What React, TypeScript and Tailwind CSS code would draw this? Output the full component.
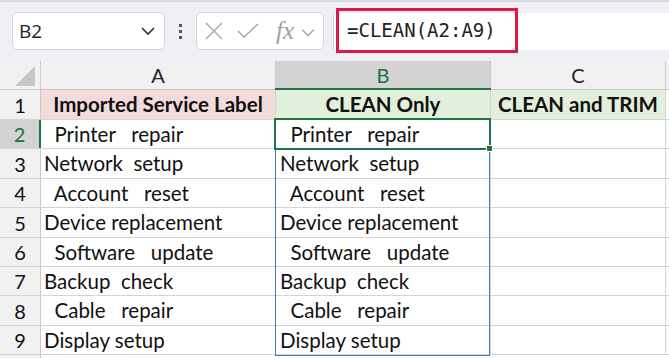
import React from "react";

const rows: { n: number; a: string; b: string; h: number }[] = [
  { n: 2, a: "  Printer   repair", b: "  Printer   repair", h: 29 },
  { n: 3, a: "Network  setup", b: "Network  setup", h: 30 },
  { n: 4, a: "  Account   reset", b: "  Account   reset", h: 29 },
  { n: 5, a: "Device replacement", b: "Device replacement", h: 30 },
  { n: 6, a: "  Software   update", b: "  Software   update", h: 29 },
  { n: 7, a: "Backup  check", b: "Backup  check", h: 29 },
  { n: 8, a: "  Cable   repair", b: "  Cable   repair", h: 30 },
  { n: 9, a: "Display setup", b: "Display setup", h: 29 },
];

const cellFont = { fontFamily: "Lato, 'Noto Sans', sans-serif" };

export default function App() {
  return (
    <div
      className="w-[669px] h-[358px] overflow-hidden bg-[#eef0f3] relative"
      style={cellFont}
    >
      {/* toolbar */}
      <div className="h-[61px] border-t-2 border-[#d6d8dc] flex items-start pt-[10px]">
        <div className="ml-[12px] w-[153px] h-[38px] rounded-[6px] border border-[#d4d6da] bg-white flex items-center justify-between pl-[6px] pr-[8px]">
          <span className="text-[19px] text-[#222]" style={{ fontFamily: "'Open Sans', 'Noto Sans', sans-serif" }}>
            B2
          </span>
          <svg width="16" height="10" viewBox="0 0 16 10">
            <path d="M2 2 L8 8 L14 2" fill="none" stroke="#333" strokeWidth="1.6" />
          </svg>
        </div>
        <div className="w-[31px] h-[38px] flex flex-col items-center justify-center gap-[3px]">
          <div className="w-[3px] h-[3px] bg-[#555]" />
          <div className="w-[3px] h-[3px] bg-[#555]" />
          <div className="w-[3px] h-[3px] bg-[#555]" />
        </div>
        <div className="w-[128px] h-[38px] rounded-[6px] border border-[#d4d6da] bg-white flex items-center pl-[8px]">
          <svg width="18" height="18" viewBox="0 0 18 18">
            <path d="M1 1 L17 17 M17 1 L1 17" stroke="#a6a6a6" strokeWidth="1.4" />
          </svg>
          <svg width="22" height="16" viewBox="0 0 22 16" className="ml-[14px]">
            <path d="M1 8 L7 14 L21 1" fill="none" stroke="#a6a6a6" strokeWidth="1.4" />
          </svg>
          <span
            className="ml-[17px] text-[25px] italic text-[#a0a0a0] leading-none mb-[2px]"
            style={{ fontFamily: "'Liberation Serif', serif" }}
          >
            fx
          </span>
          <svg width="14" height="9" viewBox="0 0 14 9" className="ml-[7px] mt-[2px]">
            <path d="M1 1.5 L7 7.5 L13 1.5" fill="none" stroke="#a6a6a6" strokeWidth="1.4" />
          </svg>
        </div>
        <div className="ml-[9px] flex-1 h-[37px] mt-[1px] bg-white border-l border-[#d0d2d6] relative">
          <div className="absolute left-[2px] top-[-5px] w-[182px] h-[45px] border-[3px] border-[#e0184a]" />
          <div
            className="absolute left-[13px] top-[8px] text-[19px] text-[#222] leading-none"
            style={{ fontFamily: "'DejaVu Sans Mono', monospace" }}
          >
            =CLEAN(A2:A9)
          </div>
        </div>
      </div>

      {/* column header row */}
      <div className="flex h-[29px] border-b border-[#c9c9c9] bg-[#f1f1f1] text-[20px] text-[#222]">
        <div className="w-[41px] border-r border-[#c9c9c9] flex items-end justify-end pr-[5px] pb-[3px]">
          <svg width="20" height="20" viewBox="0 0 20 20">
            <path d="M20 0 L20 20 L0 20 Z" fill="#c6c6c6" />
          </svg>
        </div>
        <div className="w-[235px] border-r border-[#c9c9c9] flex items-center justify-center">A</div>
        <div className="w-[215px] border-r border-[#c9c9c9] bg-[#d3d3d3] flex items-center justify-center text-[#1e6e3e] relative">
          B
          <div className="absolute left-[-1px] right-[-1px] bottom-[-1px] h-[2px] bg-[#217346]" />
        </div>
        <div className="w-[175px] border-r border-[#c9c9c9] flex items-center justify-center">C</div>
        <div className="flex-1" />
      </div>

      {/* row 1 */}
      <div className="flex h-[30px] border-b border-[#d4d4d4] text-[20.5px] text-[#111]">
        <div className="w-[41px] border-r border-[#c9c9c9] bg-[#f1f1f1] flex items-center justify-center text-[20px]">1</div>
        <div className="w-[235px] border-r border-[#d4d4d4] bg-[#f2dcdb] flex items-center justify-center font-bold">
          Imported Service Label
        </div>
        <div className="w-[215px] border-r border-[#d4d4d4] bg-[#e2efda] flex items-center justify-center font-bold">
          CLEAN Only
        </div>
        <div className="w-[175px] border-r border-[#d4d4d4] bg-[#e2efda] flex items-center justify-center font-bold">
          CLEAN and TRIM
        </div>
        <div className="flex-1 bg-white" />
      </div>

      {rows.map((r) => (
        <div
          key={r.n}
          className="flex border-b border-[#d4d4d4] text-[20.5px] text-[#111]"
          style={{ height: r.h }}
        >
          <div
            className={
              r.n === 2
                ? "w-[41px] border-r-2 border-[#217346] bg-[#d3d3d3] text-[#1e6e3e] text-[20px] flex items-center justify-center"
                : "w-[41px] border-r border-[#c9c9c9] bg-[#f1f1f1] text-[20px] flex items-center justify-center"
            }
          >
            {r.n}
          </div>
          <div className="w-[235px] border-r border-[#d4d4d4] bg-white flex items-center pl-[3px] whitespace-pre">
            {r.a}
          </div>
          <div className="w-[215px] border-r border-[#d4d4d4] bg-white flex items-center pl-[4px] whitespace-pre">
            {r.b}
          </div>
          <div className="w-[175px] border-r border-[#d4d4d4] bg-white" />
          <div className="flex-1 bg-white" />
        </div>
      ))}
      <div className="flex h-[10px]">
        <div className="w-[41px] border-r border-[#c9c9c9] bg-[#f1f1f1]" />
        <div className="flex-1 bg-white" />
      </div>

      {/* spill range border */}
      <div className="absolute left-[275px] top-[148px] w-[215px] h-[208px] border border-[#4a78c8] pointer-events-none" />
      {/* active cell */}
      <div className="absolute left-[274px] top-[118px] w-[217px] h-[32px] border-2 border-[#217346] pointer-events-none" />
      <div className="absolute left-[486px] top-[145px] w-[7px] h-[7px] bg-[#217346] border border-white" />
    </div>
  );
}
